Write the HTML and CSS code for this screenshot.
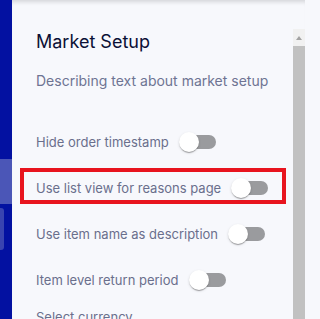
FILE: index.html
```html
<!DOCTYPE html>
<html lang="en">
<head>
<meta charset="utf-8">
<title>Market Setup</title>
<link rel="stylesheet" href="styles.css">
</head>
<body>
<div class="app">
  <aside class="sidebar">
    <div class="nav-active"></div>
    <div class="nav-pill"></div>
  </aside>
  <main class="main">
    <div class="panel">
      <section class="content">
        <h1 class="title">Market Setup</h1>
        <p class="desc">Describing text about market setup</p>
        <div class="row">
          <label class="field">
            <span class="label">Hide order timestamp</span>
            <span class="switch"><span class="track"></span><span class="thumb"></span></span>
          </label>
        </div>
        <div class="row">
          <div class="highlight"></div>
          <label class="field">
            <span class="label">Use list view for reasons page</span>
            <span class="switch"><span class="track"></span><span class="thumb"></span></span>
          </label>
        </div>
        <div class="row">
          <label class="field">
            <span class="label">Use item name as description</span>
            <span class="switch"><span class="track"></span><span class="thumb"></span></span>
          </label>
        </div>
        <div class="row">
          <label class="field">
            <span class="label">Item level return period</span>
            <span class="switch"><span class="track"></span><span class="thumb"></span></span>
          </label>
        </div>
        <div class="select-label">Select currency</div>
      </section>
      <div class="scrollbar">
        <div class="sb-arrow"><span class="tri"></span></div>
        <div class="sb-thumb"></div>
      </div>
    </div>
  </main>
</div>
</body>
</html>
```

FILE: styles.css
```css
html, body {
  margin: 0;
  padding: 0;
}
body {
  width: 305px;
  height: 319px;
  overflow: hidden;
  font-family: Inter, "Noto Sans", sans-serif;
  background: #f7f8fc;
}
.app {
  display: flex;
  width: 305px;
  height: 319px;
}
.sidebar {
  flex: 0 0 12px;
  background: #0311a1;
  display: flex;
  flex-direction: column;
  padding-top: 159px;
  box-sizing: border-box;
}
.nav-active {
  height: 45px;
  background: #4b56b7;
}
.nav-pill {
  margin-top: 4px;
  width: 4px;
  height: 42px;
  border-radius: 0 3px 3px 0;
  background: #3944b0;
}
.main {
  flex: 1;
  min-width: 0;
  background: #f7f8fc;
  box-shadow: inset 0 5px 4px -3px rgba(0, 0, 0, 0.14);
  overflow: hidden;
}
.panel {
  margin-top: 29px;
  display: flex;
  height: 290px;
}
.content {
  flex: 1;
  padding-left: 24px;
  padding-top: 3px;
}
.title {
  margin: 0;
  font-size: 18px;
  line-height: 20px;
  font-weight: 400;
  color: #0b1035;
}
.desc {
  margin: 19px 0 32px;
  font-size: 14px;
  line-height: 20px;
  color: #6e7493;
}
.row {
  position: relative;
  display: flex;
  margin-bottom: 8px;
}
.field {
  display: inline-flex;
  align-items: center;
}
.label {
  font-size: 13px;
  line-height: 20px;
  color: #6a6f8c;
  padding-right: 1px;
}
.switch {
  position: relative;
  width: 58px;
  height: 38px;
  flex: 0 0 58px;
}
.track {
  position: absolute;
  left: 12px;
  top: 12px;
  width: 34px;
  height: 14px;
  border-radius: 7px;
  background: #9a9b9e;
}
.thumb {
  position: absolute;
  left: 9px;
  top: 9px;
  width: 20px;
  height: 20px;
  border-radius: 50%;
  background: #ffffff;
  box-shadow: 0 2px 1px -1px rgba(0, 0, 0, 0.2), 0 1px 1px 0 rgba(0, 0, 0, 0.14), 0 1px 3px 0 rgba(0, 0, 0, 0.12);
}
.highlight {
  position: absolute;
  left: -16px;
  top: -1px;
  width: 266px;
  height: 36px;
  box-sizing: border-box;
  border: 4px solid #e8141e;
}
.select-label {
  font-size: 13px;
  line-height: 20px;
  color: #6a6f8c;
}
.scrollbar {
  flex: 0 0 12px;
  background: #f1f1f1;
  display: flex;
  flex-direction: column;
}
.sb-arrow {
  height: 17px;
  display: flex;
  justify-content: center;
  padding-top: 7px;
  box-sizing: border-box;
}
.tri {
  width: 0;
  height: 0;
  border-left: 3.5px solid transparent;
  border-right: 3.5px solid transparent;
  border-bottom: 4px solid #a3a3a3;
}
.sb-thumb {
  flex: 1;
  background: #c1c1c1;
}
```
